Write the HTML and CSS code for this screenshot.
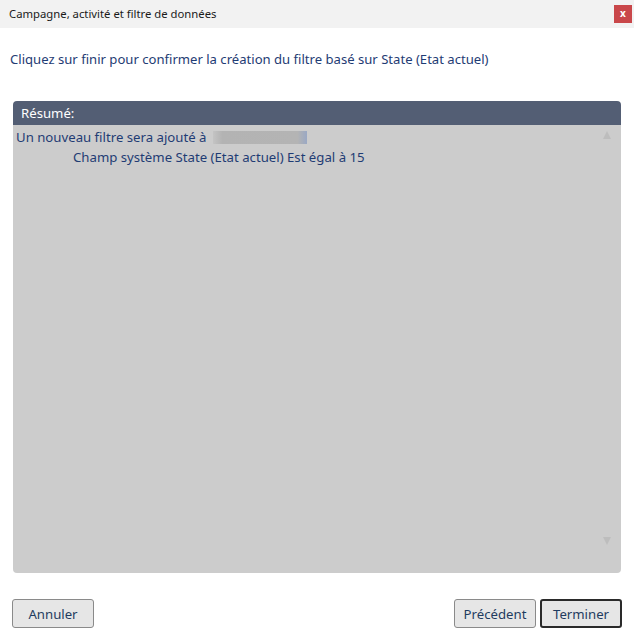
FILE: index.html
```html
<!DOCTYPE html>
<html lang="fr">
<head>
<meta charset="utf-8">
<link rel="stylesheet" href="styles.css">
</head>
<body>
<div class="dialog">
  <div class="titlebar">
    <span class="title">Campagne, activité et filtre de données</span>
    <span class="close">x</span>
  </div>
  <div class="content">
    <p class="intro">Cliquez sur finir pour confirmer la création du filtre basé sur State (Etat actuel)</p>
    <div class="panel">
      <div class="panel-head">Résumé:</div>
      <div class="panel-body">
        <div class="line">Un nouveau filtre sera ajouté à <span class="redact"></span></div>
        <div class="line indent">Champ système State (Etat actuel) Est égal à 15</div>
        <span class="arrow up"></span>
        <span class="arrow down"></span>
      </div>
    </div>
  </div>
  <div class="footer">
    <button class="btn">Annuler</button>
    <div class="right">
      <button class="btn">Précédent</button>
      <button class="btn primary">Terminer</button>
    </div>
  </div>
</div>
</body>
</html>
```
FILE: styles.css
```css
html, body {
  margin: 0;
  padding: 0;
  background: #ffffff;
}
body {
  font-family: "Noto Sans", "Open Sans", sans-serif;
  width: 634px;
  height: 640px;
  overflow: hidden;
}
.dialog {
  display: flex;
  flex-direction: column;
  height: 640px;
}
.titlebar {
  height: 28px;
  background: #f2f2f2;
  display: flex;
  align-items: center;
  justify-content: space-between;
  padding: 0 2px 0 9px;
}
.title {
  font-size: 11.3px;
  color: #1a1a1a;
  position: relative;
  top: -1px;
}
.close {
  width: 18px;
  height: 18px;
  background: #c9474a;
  color: #ffffff;
  font-size: 10px;
  font-weight: bold;
  display: flex;
  align-items: center;
  justify-content: center;
  line-height: 1;
  padding-bottom: 2px;
  box-sizing: border-box;
}
.content {
  padding: 0 13px 0 13px;
  flex: 1;
  display: flex;
  flex-direction: column;
}
.intro {
  margin: 22px 0 0 -3px;
  font-size: 13.1px;
  color: #1f3c74;
  line-height: 19px;
}
.panel {
  margin-top: 32px;
  height: 472px;
  display: flex;
  flex-direction: column;
  border-radius: 4px;
  overflow: hidden;
}
.panel-head {
  background: #535e74;
  color: #ffffff;
  font-size: 13.2px;
  height: 24px;
  line-height: 24px;
  padding-left: 8px;
}
.panel-body {
  background: #cccccc;
  flex: 1;
  position: relative;
  padding-top: 2px;
  margin-left: -2px;
}
.line {
  font-size: 13.2px;
  color: #1f3c74;
  line-height: 20px;
  padding-left: 5px;
  display: flex;
  align-items: center;
}
.indent {
  padding-left: 62px;
}
.redact {
  display: inline-block;
  width: 94px;
  height: 13px;
  margin-left: 7px;
  background: linear-gradient(90deg, #c4c4c4 0%, #b3b3b3 10%, #b4b4b4 90%, #9aa8c4 100%);
  filter: blur(0.6px);
}
.arrow {
  position: absolute;
  right: 10px;
  width: 0;
  height: 0;
  border-left: 4px solid transparent;
  border-right: 4px solid transparent;
}
.arrow.up {
  top: 6px;
  border-bottom: 8px solid #bdbdbd;
}
.arrow.down {
  bottom: 28px;
  border-top: 8px solid #bdbdbd;
}
.footer {
  height: 66px;
  display: flex;
  justify-content: space-between;
  align-items: flex-start;
  padding: 25px 12px 0 12px;
  box-sizing: border-box;
}
.right {
  display: flex;
  gap: 4px;
}
.btn {
  width: 82px;
  height: 29px;
  border: 1px solid #8a8a8a;
  border-radius: 3px;
  background: #e6e6e6;
  color: #1f3c60;
  font-family: "Noto Sans", "Open Sans", sans-serif;
  font-size: 13.2px;
  padding: 0;
  margin: 0;
}
.btn.primary {
  border: 2px solid #2a2a2a;
}
```
